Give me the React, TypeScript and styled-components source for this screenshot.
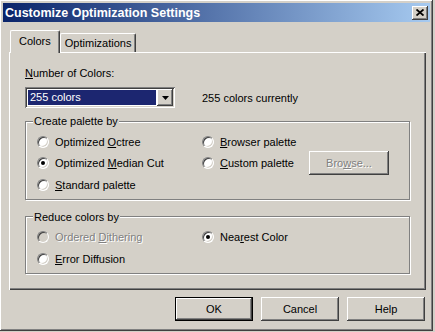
import React from 'react';
import styled, { createGlobalStyle, css } from 'styled-components';

const GlobalStyle = createGlobalStyle`
  html, body {
    margin: 0;
    padding: 0;
    background: #d4d0c8;
  }
  body {
    font-family: "Liberation Sans", Arial, sans-serif;
    font-size: 11px;
    color: #000;
  }
`;

const raised = css`
  box-shadow: inset -1px -1px #404040, inset 1px 1px #ffffff, inset -2px -2px #808080, inset 2px 2px #d4d0c8;
`;

const Window = styled.div`
  width: 433px;
  height: 331px;
  box-sizing: border-box;
  padding: 3px;
  background: #d4d0c8;
  display: flex;
  flex-direction: column;
  box-shadow: inset -1px -1px #404040, inset 1px 1px #ffffff, inset -2px -2px #808080;
`;

const TitleBar = styled.div`
  height: 19px;
  display: flex;
  align-items: center;
  justify-content: space-between;
  padding: 0 2px 0 2px;
  background: linear-gradient(to right, #0a246a, #a6caf0);
`;

const Title = styled.span`
  color: #fff;
  font-weight: bold;
  font-size: 12.5px;
`;

const CloseButton = styled.div`
  width: 16px;
  height: 14px;
  background: #d4d0c8;
  display: flex;
  align-items: center;
  justify-content: center;
  ${raised}
`;

const Body = styled.div`
  flex: 1;
  display: flex;
  flex-direction: column;
  padding: 8px 4px 0 6px;
`;

const Tabs = styled.div`
  display: flex;
  align-items: flex-end;
  padding-left: 1px;
  height: 22px;
  position: relative;
  z-index: 1;
`;

const Tab = styled.div<{ $active?: boolean }>`
  height: ${(p) => (p.$active ? 23 : 19)}px;
  box-sizing: border-box;
  padding: ${(p) => (p.$active ? '3px 8px 0 8px' : '2px 4px 0 4px')};
  margin-bottom: ${(p) => (p.$active ? -1 : 0)}px;
  background: #d4d0c8;
  border-top: 1px solid #fff;
  border-left: 1px solid #fff;
  border-right: 1px solid #404040;
  border-radius: 2px 2px 0 0;
  box-shadow: inset -1px 0 #808080;
  line-height: 14px;
`;

const Panel = styled.div`
  width: 417px;
  height: 238px;
  box-sizing: border-box;
  padding: 14px 16px 0 16px;
  display: flex;
  flex-direction: column;
  box-shadow: inset 1px 1px #ffffff, inset -1px -1px #404040, inset -2px -2px #808080;
`;

const Label = styled.div`
  line-height: 14px;
  height: 14px;
`;

const ComboRow = styled.div`
  display: flex;
  align-items: center;
  gap: 27px;
  margin-top: 7px;
`;

const Combo = styled.div`
  width: 150px;
  height: 21px;
  box-sizing: border-box;
  padding: 2px;
  background: #fff;
  display: flex;
  box-shadow: inset 1px 1px #808080, inset -1px -1px #ffffff, inset 2px 2px #404040, inset -2px -2px #d4d0c8;
`;

const ComboValue = styled.div`
  flex: 1;
  margin: 1px;
  padding-left: 2px;
  background: #1c2670;
  color: #fff;
  line-height: 15px;
`;

const ComboArrow = styled.div`
  width: 16px;
  background: #d4d0c8;
  display: flex;
  align-items: center;
  justify-content: center;
  ${raised}
`;

const Group = styled.fieldset<{ $top: number; $rows: number }>`
  margin: ${(p) => p.$top}px 0 0 0;
  padding: 3px 10px 3px 11px;
  border: 1px solid #808080;
  box-shadow: inset 1px 1px #ffffff, 1px 1px #ffffff;
  min-width: 0;
  display: grid;
  grid-template-columns: 165px 1fr;
  grid-template-rows: repeat(${(p) => p.$rows}, 21.5px);
  align-items: center;
`;

const Legend = styled.legend`
  padding: 0 1px;
  margin-left: -4px;
  line-height: 14px;
  background: #d4d0c8;
`;

const Option = styled.label<{ $disabled?: boolean }>`
  display: flex;
  align-items: center;
  gap: 6px;
  white-space: nowrap;
  ${(p) =>
    p.$disabled &&
    css`
      color: #808080;
      text-shadow: 1px 1px #ffffff;
    `}
`;

const Radio = styled.span<{ $checked?: boolean; $disabled?: boolean }>`
  position: relative;
  width: 12px;
  height: 12px;
  box-sizing: border-box;
  border-radius: 50%;
  border: 1px solid;
  border-color: #808080 #ffffff #ffffff #808080;
  background: ${(p) => (p.$disabled ? '#d4d0c8' : '#ffffff')};
  box-shadow: inset 1px 1px #404040, inset -1px -1px #d4d0c8;
  flex-shrink: 0;
  &::after {
    content: '';
    display: ${(p) => (p.$checked ? 'block' : 'none')};
    position: absolute;
    left: 3px;
    top: 3px;
    width: 4px;
    height: 4px;
    border-radius: 50%;
    background: #000;
  }
`;

const OptionWithButton = styled.div`
  display: flex;
  align-items: center;
  gap: 15px;
`;

const Button = styled.div<{ $default?: boolean; $disabled?: boolean; $width?: number }>`
  width: ${(p) => p.$width ?? 78}px;
  height: 24px;
  box-sizing: border-box;
  display: flex;
  align-items: center;
  justify-content: center;
  background: #d4d0c8;
  ${raised}
  ${(p) =>
    p.$default &&
    css`
      border: 1px solid #000;
      box-shadow: inset -1px -1px #404040, inset 1px 1px #ffffff, inset -2px -2px #808080;
    `}
  ${(p) =>
    p.$disabled &&
    css`
      color: #808080;
      text-shadow: 1px 1px #ffffff;
    `}
`;

const ButtonRow = styled.div`
  display: flex;
  justify-content: flex-end;
  gap: 8px;
  margin-top: 7px;
  padding-right: 1px;
`;

export default function App() {
  return (
    <>
      <GlobalStyle />
      <Window>
        <TitleBar>
          <Title>Customize Optimization Settings</Title>
          <CloseButton>
            <svg width="8" height="7" viewBox="0 0 8 7">
              <path d="M0.5 0.5 L7.5 6.5 M7.5 0.5 L0.5 6.5" stroke="#000" strokeWidth="1.8" />
            </svg>
          </CloseButton>
        </TitleBar>
        <Body>
          <Tabs>
            <Tab $active>Colors</Tab>
            <Tab>Optimizations</Tab>
          </Tabs>
          <Panel>
            <Label>
              <u>N</u>umber of Colors:
            </Label>
            <ComboRow>
              <Combo>
                <ComboValue>255 colors</ComboValue>
                <ComboArrow>
                  <svg width="7" height="4" viewBox="0 0 7 4">
                    <path d="M0 0 H7 L3.5 4 Z" fill="#000" />
                  </svg>
                </ComboArrow>
              </Combo>
              <span>255 colors currently</span>
            </ComboRow>

            <Group $top={6} $rows={3}>
              <Legend>Create palette by</Legend>
              <Option>
                <Radio />
                <span>
                  Optimized <u>O</u>ctree
                </span>
              </Option>
              <Option>
                <Radio />
                <span>
                  <u>B</u>rowser palette
                </span>
              </Option>
              <Option>
                <Radio $checked />
                <span>
                  Optimized <u>M</u>edian Cut
                </span>
              </Option>
              <OptionWithButton>
                <Option>
                  <Radio />
                  <span>
                    <u>C</u>ustom palette
                  </span>
                </Option>
                <Button $disabled $width={80}>
                  <span>
                    Bro<u>w</u>se...
                  </span>
                </Button>
              </OptionWithButton>
              <Option>
                <Radio />
                <span>
                  <u>S</u>tandard palette
                </span>
              </Option>
            </Group>

            <Group $top={10} $rows={2}>
              <Legend>Reduce colors by</Legend>
              <Option $disabled>
                <Radio $disabled />
                <span>
                  Ordered <u>D</u>ithering
                </span>
              </Option>
              <Option>
                <Radio $checked />
                <span>
                  Nea<u>r</u>est Color
                </span>
              </Option>
              <Option>
                <Radio />
                <span>
                  <u>E</u>rror Diffusion
                </span>
              </Option>
            </Group>
          </Panel>
          <ButtonRow>
            <Button $default>OK</Button>
            <Button>Cancel</Button>
            <Button>Help</Button>
          </ButtonRow>
        </Body>
      </Window>
    </>
  );
}
